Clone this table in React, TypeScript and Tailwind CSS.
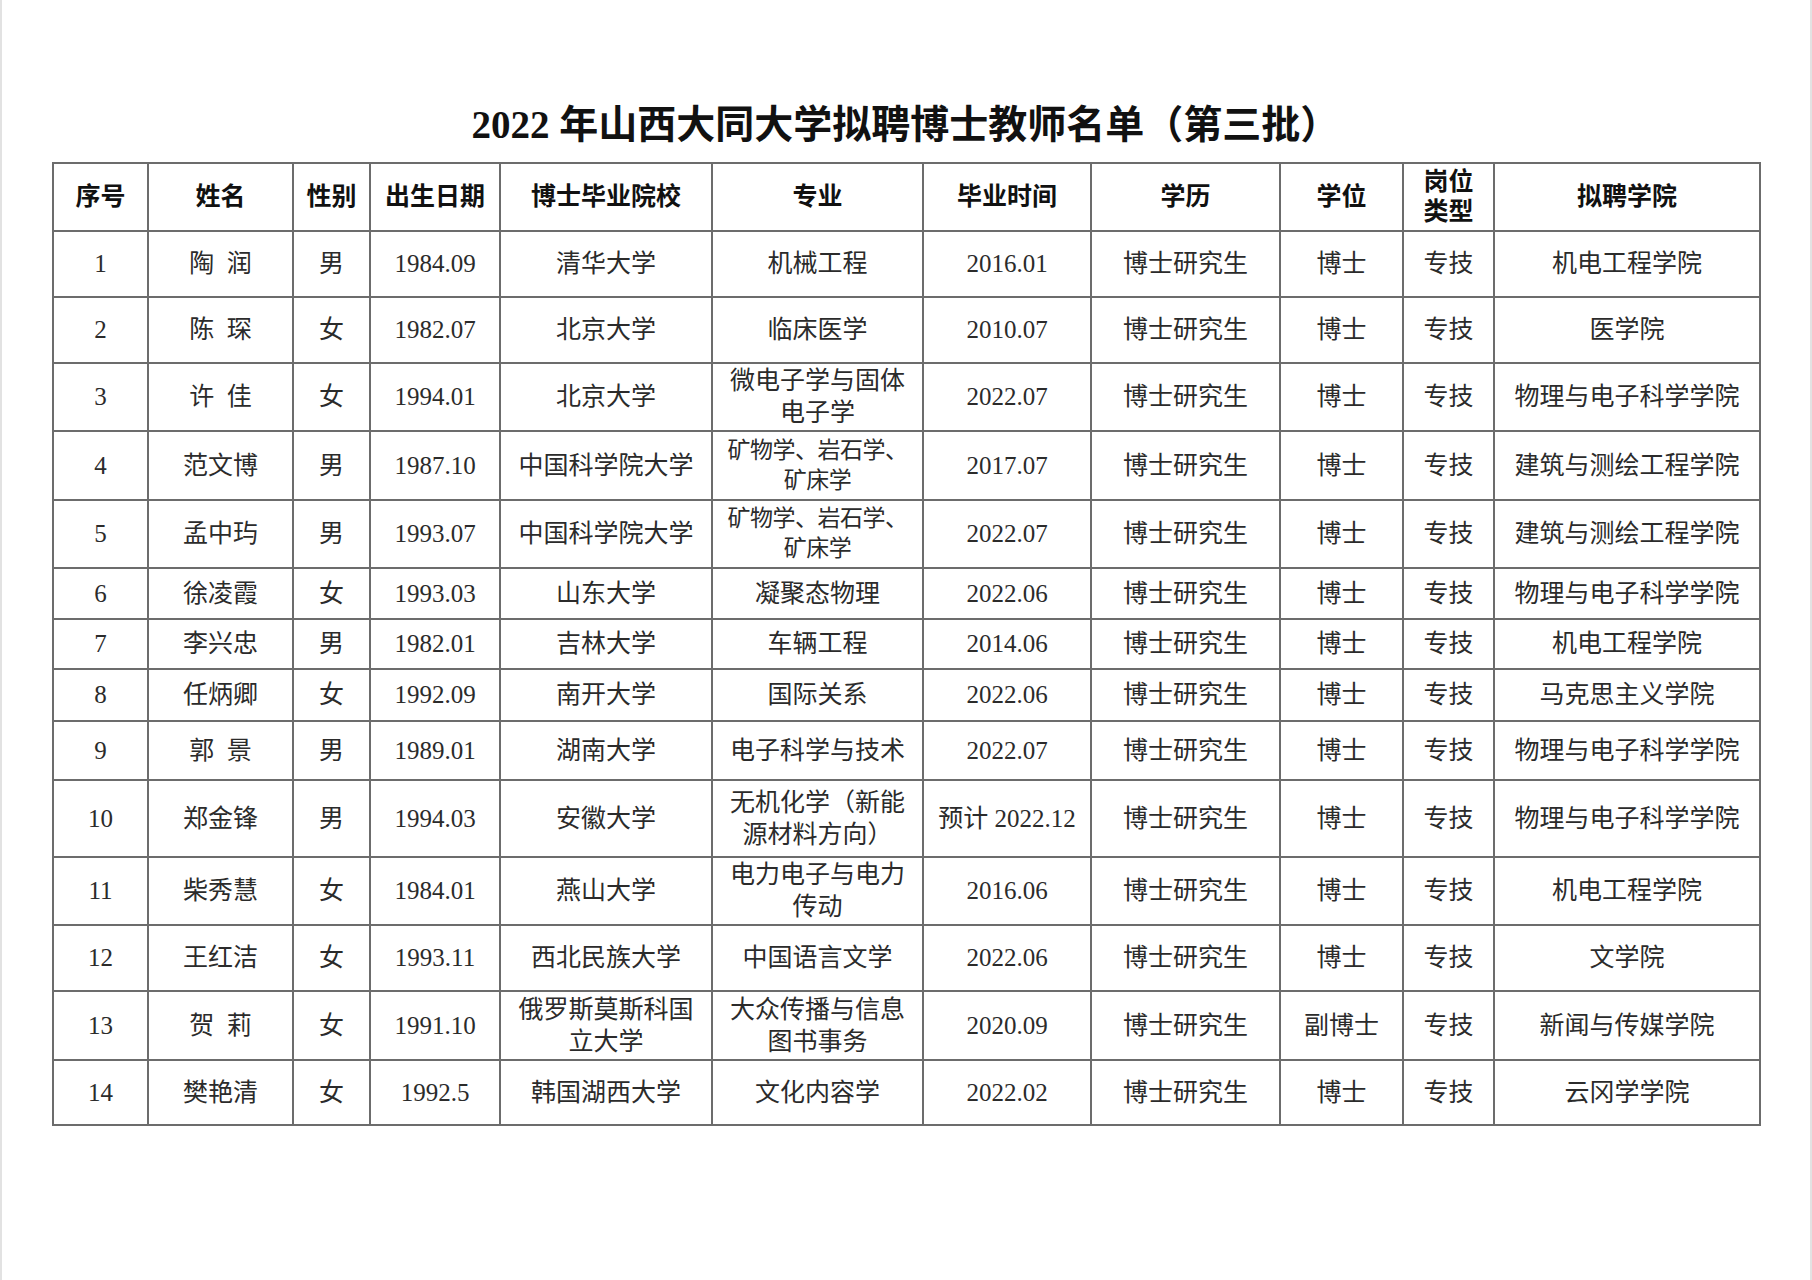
const serif = "font-['Liberation_Serif','Noto_Sans_CJK_SC',serif]";

type Row = {
  no: string;
  name: string;
  sex: string;
  birth: string;
  school: string[];
  major: string[];
  grad: string;
  edu: string;
  degree: string;
  kind: string;
  college: string;
  h: string;
  tight?: boolean;
};

const rows: Row[] = [
  { no: "1", name: "陶\u2002润", sex: "男", birth: "1984.09", school: ["清华大学"], major: ["机械工程"], grad: "2016.01", edu: "博士研究生", degree: "博士", kind: "专技", college: "机电工程学院", h: "h-[66px]" },
  { no: "2", name: "陈\u2002琛", sex: "女", birth: "1982.07", school: ["北京大学"], major: ["临床医学"], grad: "2010.07", edu: "博士研究生", degree: "博士", kind: "专技", college: "医学院", h: "h-[66px]" },
  { no: "3", name: "许\u2002佳", sex: "女", birth: "1994.01", school: ["北京大学"], major: ["微电子学与固体", "电子学"], grad: "2022.07", edu: "博士研究生", degree: "博士", kind: "专技", college: "物理与电子科学学院", h: "h-[68px]" },
  { no: "4", name: "范文博", sex: "男", birth: "1987.10", school: ["中国科学院大学"], major: ["矿物学、岩石学、", "矿床学"], grad: "2017.07", edu: "博士研究生", degree: "博士", kind: "专技", college: "建筑与测绘工程学院", h: "h-[69px]", tight: true },
  { no: "5", name: "孟中玙", sex: "男", birth: "1993.07", school: ["中国科学院大学"], major: ["矿物学、岩石学、", "矿床学"], grad: "2022.07", edu: "博士研究生", degree: "博士", kind: "专技", college: "建筑与测绘工程学院", h: "h-[68px]", tight: true },
  { no: "6", name: "徐凌霞", sex: "女", birth: "1993.03", school: ["山东大学"], major: ["凝聚态物理"], grad: "2022.06", edu: "博士研究生", degree: "博士", kind: "专技", college: "物理与电子科学学院", h: "h-[51px]" },
  { no: "7", name: "李兴忠", sex: "男", birth: "1982.01", school: ["吉林大学"], major: ["车辆工程"], grad: "2014.06", edu: "博士研究生", degree: "博士", kind: "专技", college: "机电工程学院", h: "h-[50px]" },
  { no: "8", name: "任炳卿", sex: "女", birth: "1992.09", school: ["南开大学"], major: ["国际关系"], grad: "2022.06", edu: "博士研究生", degree: "博士", kind: "专技", college: "马克思主义学院", h: "h-[52px]" },
  { no: "9", name: "郭\u2002景", sex: "男", birth: "1989.01", school: ["湖南大学"], major: ["电子科学与技术"], grad: "2022.07", edu: "博士研究生", degree: "博士", kind: "专技", college: "物理与电子科学学院", h: "h-[59px]" },
  { no: "10", name: "郑金锋", sex: "男", birth: "1994.03", school: ["安徽大学"], major: ["无机化学（新能", "源材料方向）"], grad: "预计 2022.12", edu: "博士研究生", degree: "博士", kind: "专技", college: "物理与电子科学学院", h: "h-[77px]" },
  { no: "11", name: "柴秀慧", sex: "女", birth: "1984.01", school: ["燕山大学"], major: ["电力电子与电力", "传动"], grad: "2016.06", edu: "博士研究生", degree: "博士", kind: "专技", college: "机电工程学院", h: "h-[68px]" },
  { no: "12", name: "王红洁", sex: "女", birth: "1993.11", school: ["西北民族大学"], major: ["中国语言文学"], grad: "2022.06", edu: "博士研究生", degree: "博士", kind: "专技", college: "文学院", h: "h-[66px]" },
  { no: "13", name: "贺\u2002莉", sex: "女", birth: "1991.10", school: ["俄罗斯莫斯科国", "立大学"], major: ["大众传播与信息", "图书事务"], grad: "2020.09", edu: "博士研究生", degree: "副博士", kind: "专技", college: "新闻与传媒学院", h: "h-[69px]" },
  { no: "14", name: "樊艳清", sex: "女", birth: "1992.5", school: ["韩国湖西大学"], major: ["文化内容学"], grad: "2022.02", edu: "博士研究生", degree: "博士", kind: "专技", college: "云冈学学院", h: "h-[65px]" },
];

const headers: string[][] = [
  ["序号"], ["姓名"], ["性别"], ["出生日期"], ["博士毕业院校"], ["专业"], ["毕业时间"], ["学历"], ["学位"], ["岗位", "类型"], ["拟聘学院"],
];

function Lines({ lines, tight }: { lines: string[]; tight?: boolean }) {
  return (
    <div className={tight ? "text-[23px] leading-[30px] tracking-[-0.5px]" : "leading-[32px]"}>
      {lines.map((l, i) => (
        <div key={i} className="whitespace-nowrap">{l}</div>
      ))}
    </div>
  );
}

const cell = "border-2 border-[#6c6c6c] text-center align-middle p-0";

export default function App() {
  return (
    <div className={`w-[1812px] h-[1280px] bg-white border-l-2 border-r-2 border-[#e2e2e2] ${serif}`}>
      <div className="pt-[101px] pl-[50px]">
        <h1 className="w-[1707px] text-center text-[39px] leading-[48px] font-bold text-[#111] mb-[13px]">
          2022 年山西大同大学拟聘博士教师名单（第三批）
        </h1>
        <table className="table-fixed border-collapse w-[1707px] text-[25px] text-[#2b2b2b]">
          <colgroup>
            <col className="w-[95px]" />
            <col className="w-[145px]" />
            <col className="w-[77px]" />
            <col className="w-[130px]" />
            <col className="w-[212px]" />
            <col className="w-[211px]" />
            <col className="w-[168px]" />
            <col className="w-[189px]" />
            <col className="w-[123px]" />
            <col className="w-[91px]" />
            <col className="w-[266px]" />
          </colgroup>
          <thead>
            <tr>
              {headers.map((h, i) => (
                <th key={i} className={`${cell} h-[68px] font-bold text-[#111] text-[25px]`}>
                  <div className="leading-[30px]">
                    {h.map((l, j) => (
                      <div key={j} className="whitespace-nowrap">{l}</div>
                    ))}
                  </div>
                </th>
              ))}
            </tr>
          </thead>
          <tbody>
            {rows.map((r) => (
              <tr key={r.no}>
                <td className={`${cell} ${r.h}`}>{r.no}</td>
                <td className={cell}>{r.name}</td>
                <td className={cell}>{r.sex}</td>
                <td className={cell}>{r.birth}</td>
                <td className={cell}><Lines lines={r.school} /></td>
                <td className={cell}><Lines lines={r.major} tight={r.tight} /></td>
                <td className={`${cell} whitespace-nowrap`}>{r.grad}</td>
                <td className={cell}>{r.edu}</td>
                <td className={cell}>{r.degree}</td>
                <td className={cell}>{r.kind}</td>
                <td className={cell}>{r.college}</td>
              </tr>
            ))}
          </tbody>
        </table>
      </div>
    </div>
  );
}
